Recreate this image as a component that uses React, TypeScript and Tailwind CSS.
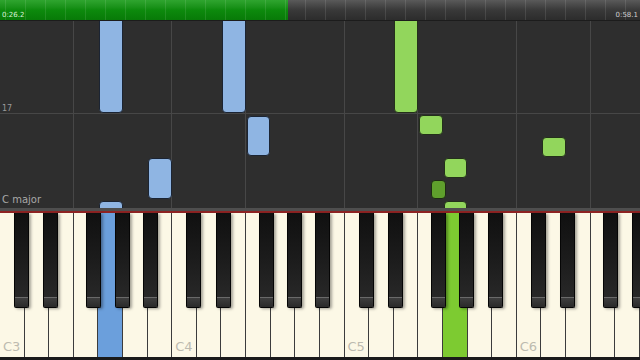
import React from "react";

const W = 640 / 26;
const ROLL_H = 187;
// black key centres inside an octave, in white-key widths
const BLACK = [0.87, 2.06, 3.81, 4.97, 6.12];
const BLACK_W = 15;

type Note = { x: number; w: number; top: number; bottom: number; kind: "blue" | "green" | "dark" };

const white = (i: number) => ({ x: i * W + 0.5, w: W - 1 });
const black = (oct: number, k: number) => ({ x: (oct * 7 + BLACK[k]) * W - BLACK_W / 2, w: BLACK_W });

const notes: Note[] = [
  { ...white(4), top: -12, bottom: 92, kind: "blue" },
  { ...white(9), top: -12, bottom: 92, kind: "blue" },
  { ...white(10), top: 95, bottom: 135, kind: "blue" },
  { ...white(6), top: 137, bottom: 178, kind: "blue" },
  { ...white(4), top: 180, bottom: 200, kind: "blue" },
  { ...white(16), top: -12, bottom: 92, kind: "green" },
  { ...white(17), top: 94, bottom: 114, kind: "green" },
  { ...white(18), top: 137, bottom: 157, kind: "green" },
  { ...black(2, 2), top: 159, bottom: 178, kind: "dark" },
  { ...white(18), top: 180, bottom: 200, kind: "green" },
  { ...white(22), top: 116, bottom: 136, kind: "green" },
];

const noteClass = {
  blue: "bg-[#8fb5e3] border-[#1b2433]",
  green: "bg-[#92d65c] border-[#23301a]",
  dark: "bg-[#5f9f2c] border-[#1e2a14]",
};

const gridX = [3, 7, 10, 14, 17, 21, 24];
const lit: Record<number, string> = { 4: "bg-[#6b9fdc]", 18: "bg-[#7dcb31]" };

function TopBar() {
  return (
    <div className="relative h-[21px] border-b border-[#1c1c1c]">
      <div className="flex h-full">
        <div className="w-[288px] bg-gradient-to-b from-[#2fa52f] via-[#0d8a0d] to-[#087a08]" />
        <div className="flex-1 bg-gradient-to-b from-[#5a5a5a] via-[#393939] to-[#2c2c2c]" />
      </div>
      <div className="absolute inset-0 flex pl-[5px]">
        {Array.from({ length: 32 }).map((_, i) => (
          <div key={i} className="w-[20px] shrink-0 border-l border-[#ffffff]/10" />
        ))}
      </div>
      <div className="absolute inset-x-0 bottom-[1px] flex justify-between px-[2px] font-['DejaVu_Sans',sans-serif] text-[7px] leading-none">
        <span className="text-[#d8f0d8]">0:26.2</span>
        <span className="text-[#d0d0d0]">0:58.1</span>
      </div>
    </div>
  );
}

function Roll() {
  return (
    <div className="relative h-[187px] overflow-hidden bg-[#2e2e2e] font-['DejaVu_Sans',sans-serif]">
      {gridX.map((g) => (
        <div key={g} className="absolute top-0 bottom-0 w-px bg-[#474747]" style={{ left: Math.round(g * W) - 1 }} />
      ))}
      <div className="absolute left-0 right-0 top-[92px] h-px bg-[#474747]" />
      <span className="absolute left-[2px] top-[82px] text-[8px] text-[#9a9a9a]">17</span>
      {notes.map((n, i) => (
        <div
          key={i}
          className={`absolute rounded-[4px] border ${noteClass[n.kind]}`}
          style={{ left: n.x, width: n.w, top: n.top, height: n.bottom - n.top }}
        />
      ))}
      <span className="absolute left-[2px] bottom-[3px] text-[10px] leading-none text-[#a8a8a8]">C major</span>
    </div>
  );
}

function Keyboard() {
  const names = ["C3", "", "", "", "", "", "", "C4", "", "", "", "", "", "", "C5", "", "", "", "", "", "", "C6", "", "", "", ""];
  return (
    <div className="relative flex h-[147px] bg-[#1a1a1a] pb-[3px]">
      {names.map((label, i) => (
        <div
          key={i}
          className={`flex flex-1 flex-col justify-end border-r border-[#3c3c3c] pb-[4px] pl-[3px] ${lit[i] ?? "bg-[#fcf8e6]"}`}
        >
          <span className="font-['DejaVu_Sans',sans-serif] text-[13px] leading-none text-[#bdbbb0]">{label}</span>
        </div>
      ))}
      {[0, 1, 2, 3].map((oct) =>
        BLACK.map((_, k) => {
          const b = black(oct, k);
          if (b.x > 640) return null;
          return (
            <div
              key={`${oct}-${k}`}
              className="absolute top-0 flex h-[95px] flex-col justify-end rounded-b-[2px] border border-t-0 border-[#050505] bg-gradient-to-b from-[#101010] via-[#1c1c1c] to-[#2b2b2b] shadow-[2px_1px_3px_rgba(0,0,0,0.35)]"
              style={{ left: b.x, width: b.w }}
            >
              <div className="h-[10px] border-t border-[#6a6a6a] bg-gradient-to-b from-[#3e3e3e] to-[#2a2a2a]" />
            </div>
          );
        })
      )}
    </div>
  );
}

export default function App() {
  return (
    <div className="h-[360px] w-[640px] overflow-hidden bg-[#2e2e2e]">
      <TopBar />
      <Roll />
      <div className="h-[3px] bg-[#4e4e4e]" />
      <div className="h-[2px] bg-[#8e2323]" />
      <Keyboard />
    </div>
  );
}
